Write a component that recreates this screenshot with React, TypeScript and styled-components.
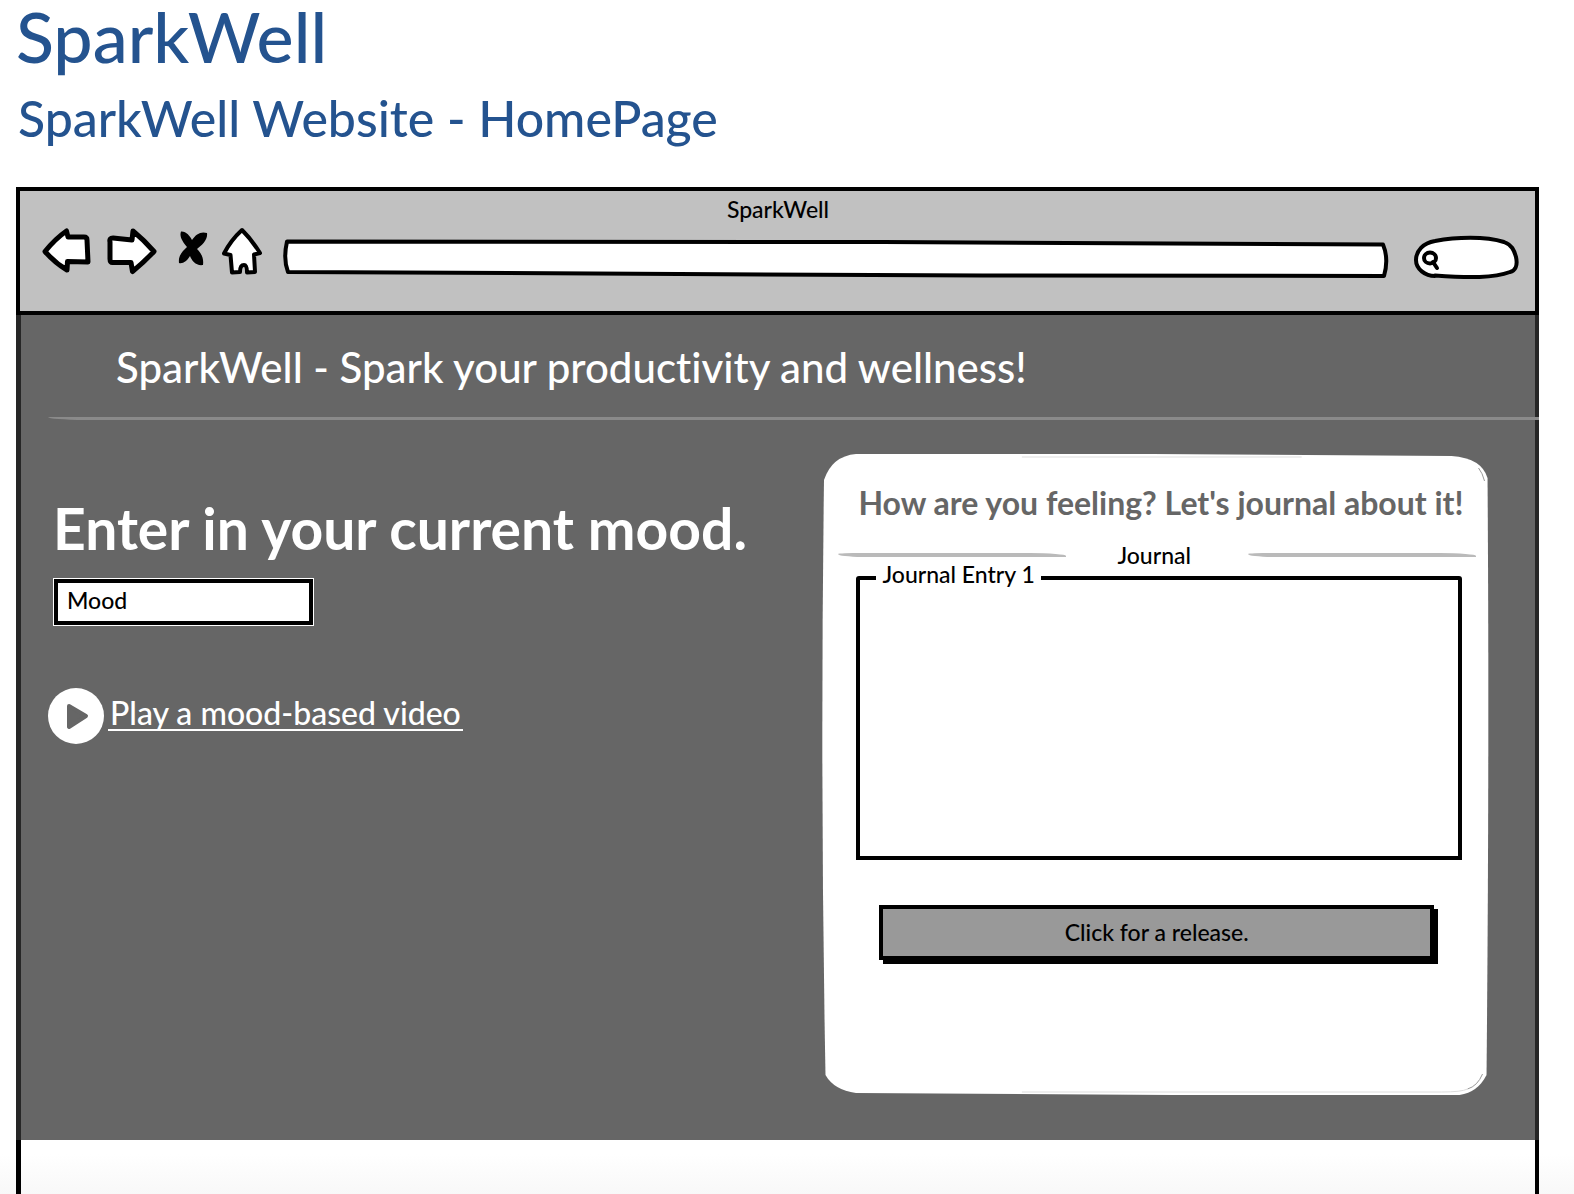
import React from "react";
import styled, { createGlobalStyle } from "styled-components";

const GlobalStyle = createGlobalStyle`
  *, *::before, *::after { box-sizing: border-box; }
  body { margin: 0; background: #fff; }
  body, button, input, textarea {
    font-family: Lato, "Open Sans", sans-serif;
    font-weight: 500;
    font-variant-ligatures: none;
  }
  h1, h2, h3, p { margin: 0; }
`;

const Page = styled.div`
  min-height: 100vh;
  display: flex;
  flex-direction: column;
  padding: 0 35px 0 16px;
  background: linear-gradient(to top, #f8f8f8 0, #fff 40px);
`;

const ProjectTitle = styled.h1`
  color: #24538f;
  font-size: 70px;
  font-weight: 500;
  line-height: 72px;
`;

const PageTitle = styled.h2`
  padding: 15px 2px 38px;
  color: #24538f;
  font-size: 50px;
  font-weight: 500;
  line-height: 62px;
`;

const Browser = styled.div`
  flex: 1;
  display: flex;
  flex-direction: column;
`;

const Toolbar = styled.header`
  height: 128px;
  border: 4px solid #000;
  background: #c1c1c1;
  padding: 0 16px 0 21px;
`;

const WindowTitle = styled.p`
  padding-right: 4px;
  font-size: 23px;
  line-height: 36px;
  text-align: center;
`;

const Controls = styled.div`
  display: flex;
  align-items: flex-end;
  height: 54px;
`;

const NavButtons = styled.nav`
  display: flex;
  align-self: flex-start;
  gap: 12px;
  margin-right: 18px;
`;

const NavButton = styled.button`
  display: block;
  padding: 0;
  border: 0;
  background: none;
  cursor: pointer;

  svg { display: block; overflow: visible; }
`;

const Field = styled.label<{ $search?: boolean }>`
  position: relative;
  flex: ${(p) => (p.$search ? "0 0 106px" : "1")};
  margin-left: ${(p) => (p.$search ? "24px" : "0")};
  height: ${(p) => (p.$search ? "46px" : "42px")};
  min-width: 0;

  svg {
    position: absolute;
    inset: 0;
    width: 100%;
    height: 100%;
  }

  input {
    position: relative;
    width: 100%;
    height: 100%;
    border: 0;
    outline: 0;
    background: none;
    padding: 0 12px 0 ${(p) => (p.$search ? "32px" : "12px")};
    font-size: 23px;
  }
`;

const Screen = styled.main`
  border: solid #262626;
  border-width: 0 4px 0 5px;
  background: #666;
  padding-bottom: 45px;
`;

const Tagline = styled.p`
  padding: 26px 95px 24px;
  color: #fff;
  font-size: 42px;
  line-height: 52px;
`;

const HeaderRule = styled.hr`
  height: 3px;
  margin: 0 -4px 0 27px;
  border: 0;
  border-radius: 36px 0 0 36px / 0 0 0 3px;
  background: #8a8a8a;
`;

const Columns = styled.div`
  display: grid;
  grid-template-columns: minmax(0, 775fr) minmax(0, 667fr);
  padding: 34px 46px 0 27px;
`;

const MoodColumn = styled.section`
  padding: 40px 0 0 5px;
`;

const MoodHeading = styled.h2`
  color: #fff;
  font-size: 57px;
  font-weight: 700;
  line-height: 68px;
`;

const MoodInput = styled.input`
  display: block;
  width: 261px;
  height: 48px;
  margin-top: 16px;
  padding: 0 9px 5px;
  border: 5px solid #000;
  outline: 1px solid #fff;
  outline-offset: -1px;
  border-radius: 0;
  background: #fff;
  color: #000;
  font-size: 23px;
`;

const VideoRow = styled.div`
  display: flex;
  align-items: center;
  gap: 4px;
  margin: 62px 0 0 -5px;
`;

const PlayButton = styled.button`
  width: 56px;
  height: 56px;
  padding: 0;
  border: 0;
  border-radius: 50%;
  background: #fff;
  cursor: pointer;

  svg { display: block; }
`;

const VideoLink = styled.a`
  margin-bottom: 4px;
  padding: 0 2px;
  border-bottom: 2px solid #fff;
  color: #fff;
  font-size: 32px;
  line-height: 32px;
  text-decoration: none;
`;

const Card = styled.section`
  position: relative;
  height: 641px;
  padding: 31px 13px 0 16px;
`;

const CardOutline = styled.svg`
  position: absolute;
  inset: 0;
  z-index: 0;
  width: 100%;
  height: 100%;
`;

const CardContent = styled.div`
  position: relative;
`;

const CardTitle = styled.h2`
  padding-left: 20px;
  color: #666;
  font-size: 32px;
  font-weight: 700;
  line-height: 36px;
  white-space: nowrap;
`;

const JournalHeading = styled.div`
  display: grid;
  grid-template-columns: 228fr 182fr 228fr;
  align-items: center;
  margin-top: 22px;
`;

const JournalRule = styled.hr`
  width: 100%;
  height: 4px;
  margin: 0;
  border: 0;
  border-radius: 24px 36px 0 24px / 1px 3px 0 3px;
  background: #bababa;
`;

const JournalTitle = styled.h3`
  padding-right: 6px;
  font-size: 23px;
  font-weight: 500;
  line-height: 24px;
  text-align: center;
`;

const Entry = styled.fieldset`
  height: 295px;
  min-width: 0;
  margin: -2px 14px 0 18px;
  padding: 0;
  border: 4px solid #000;
  border-radius: 3px 3px 0 0;

  legend {
    margin-left: 16px;
    padding: 0 6px 8px;
    font-size: 23px;
    line-height: 18px;
  }

  textarea {
    display: block;
    width: 100%;
    height: 100%;
    padding: 12px 18px;
    border: 0;
    outline: 0;
    resize: none;
    background: none;
    font-size: 23px;
  }
`;

const ReleaseButton = styled.button`
  display: block;
  width: calc(100% - 83px);
  height: 55px;
  margin: 45px 0 0 41px;
  padding: 0 0 2px;
  border: 4px solid #000;
  box-shadow: 4px 4px 0 #000;
  background: #999;
  color: #000;
  font-size: 23px;
  cursor: pointer;
`;

const BelowFold = styled.footer`
  flex: 1;
  min-height: 54px;
  border: solid #000;
  border-width: 0 4px 0 5px;
`;

const ink = {
  fill: "#fff",
  stroke: "#000",
  strokeWidth: 4,
  strokeLinejoin: "round" as const,
  strokeLinecap: "round" as const,
};

export default function App() {
  return (
    <>
      <GlobalStyle />
      <Page>
        <ProjectTitle>SparkWell</ProjectTitle>
        <PageTitle>SparkWell Website - HomePage</PageTitle>
        <Browser>
          <Toolbar>
            <WindowTitle>SparkWell</WindowTitle>
            <Controls>
              <NavButtons>
                <NavButton aria-label="Back">
                  <svg width="52" height="48" viewBox="0 0 52 48" {...ink} strokeWidth={5}>
                    <path d="M4 24.500Q14 12 25.500 4L27 10L43 10Q46 10 46 13L47 35L26.500 34.500L26 43Q14 36 4 24.500Z" />
                  </svg>
                </NavButton>
                <NavButton aria-label="Forward">
                  <svg width="52" height="48" viewBox="0 0 52 48" {...ink} strokeWidth={5}>
                    <path d="M5 15Q4 11 8 11L27 13L28 4Q39 13 49 24.500Q38 36 27.500 44.500L26 35.500L8 35.500Q5 36 5 32Z" />
                  </svg>
                </NavButton>
                <NavButton aria-label="Stop">
                  <svg width="40" height="48" viewBox="0 0 40 48">
                    <path d="M12 4.500C17 4 21 9 23 13C27 7 32 4 38 6C39 13 33 18 28 22C32 26 35 31 34 38C27 39 23 34 21 29C18 34 14 37 10 36C9 28 14 24 18 20C14 15 10 10 12 4.500Z" />
                  </svg>
                </NavButton>
                <NavButton aria-label="Home">
                  <svg width="44" height="48" viewBox="0 0 44 48" {...ink}>
                    <path d="M21 3Q31 13 39 26L33 27.500L34 45L26 45.500Q26 38 23 38Q19 38 19 45L11 45.500L9.500 28L3 26.500Q10 13 21 3Z" />
                  </svg>
                </NavButton>
              </NavButtons>
              <Field>
                <svg viewBox="0 0 1106 42" preserveAspectRatio="none" aria-hidden="true" {...ink}>
                  <path d="M4 2.500L600 3L1100 5.500Q1106 20 1101 37L700 36.500L5 33Q0 20 4 2.500Z" />
                </svg>
                <input type="text" aria-label="Address" />
              </Field>
              <Field $search>
                <svg viewBox="0 0 106 46" aria-hidden="true" {...ink}>
                  <path d="M22 41C12 41 3 34 3 25C3 16 10 8 22 6C43 2 72 1 91 7C99 10 101 15 103 22C105 31 102 36 97 37C81 43 57 43 22 40.500Z" />
                  <ellipse cx="17" cy="23" rx="6" ry="5.500" />
                  <path d="M20 27L24 33" />
                </svg>
                <input type="text" aria-label="Search" />
              </Field>
            </Controls>
          </Toolbar>
          <Screen>
            <Tagline>SparkWell - Spark your productivity and wellness!</Tagline>
            <HeaderRule />
            <Columns>
              <MoodColumn>
                <MoodHeading>Enter in your current mood.</MoodHeading>
                <MoodInput type="text" aria-label="Current mood" defaultValue="Mood" />
                <VideoRow>
                  <PlayButton aria-label="Play">
                    <svg width="56" height="56" viewBox="0 0 56 56" fill="#666" stroke="#666" strokeWidth="4" strokeLinejoin="round">
                      <path d="M21 18L38 28L21 39Z" />
                    </svg>
                  </PlayButton>
                  <VideoLink href="#video">Play a mood-based video</VideoLink>
                </VideoRow>
              </MoodColumn>
              <Card>
                <CardOutline viewBox="0 0 667 641" preserveAspectRatio="none" aria-hidden="true">
                  <path
                    fill="#fff"
                    d="M2 26Q10 2 34 0L330 0L630 2Q660 4 666 24Q668 300 665 621Q655 641 632 641.500L350 641L34 639Q12 636 3.500 621Q-2 330 2 26Z"
                  />
                  <path fill="none" stroke="#999" d="M657 14Q661 19 663 27M661 620Q656 632 646 635" />
                  <path fill="none" stroke="#ddd" d="M646 635Q640 638 620 638L200 638M200 3L480 3" />
                </CardOutline>
                <CardContent>
                  <CardTitle>How are you feeling? Let's journal about it!</CardTitle>
                  <JournalHeading>
                    <JournalRule />
                    <JournalTitle>Journal</JournalTitle>
                    <JournalRule />
                  </JournalHeading>
                  <Entry>
                    <legend>Journal Entry 1</legend>
                    <textarea aria-label="Journal Entry 1" />
                  </Entry>
                  <ReleaseButton>Click for a release.</ReleaseButton>
                </CardContent>
              </Card>
            </Columns>
          </Screen>
          <BelowFold />
        </Browser>
      </Page>
    </>
  );
}
